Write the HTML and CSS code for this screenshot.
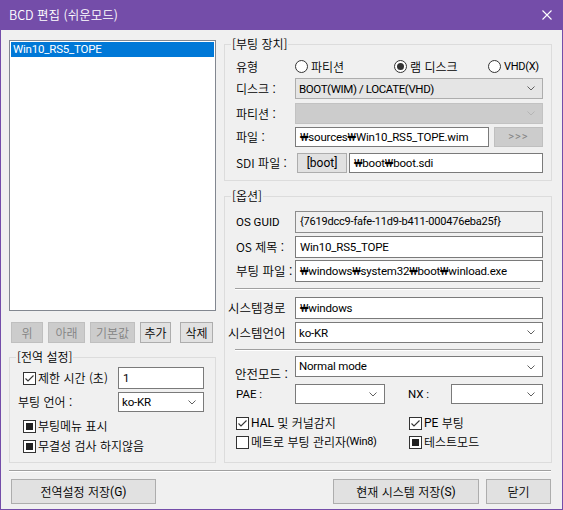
FILE: index.html
```html
<!DOCTYPE html>
<html lang="ko">
<head>
<meta charset="utf-8">
<title>BCD 편집</title>
<link rel="stylesheet" href="styles.css">
</head>
<body>
<div class="window">
  <div class="titlebar">
    <span class="title">BCD 편집 (쉬운모드)</span>
    <svg class="close" width="10" height="10" viewBox="0 0 10 10"><path d="M0.5 0.5L9.5 9.5M9.5 0.5L0.5 9.5" stroke="#fff" stroke-width="1.1" fill="none"/></svg>
  </div>
  <div class="main">
    <div class="col-left">
      <div class="listbox">
        <div class="item sel">Win10_RS5_TOPE</div>
      </div>
      <div class="btnrow">
        <div class="btn dis w32">위</div>
        <div class="btn dis w37">아래</div>
        <div class="btn dis w45">기본값</div>
        <div class="btn w31">추가</div>
        <div class="btn w33 push">삭제</div>
      </div>
      <fieldset class="group grow g-left">
        <legend>[전역 설정]</legend>
        <div class="gbody b-global">
          <div class="row h22">
            <span class="chk c95"><span class="box"><svg width="11" height="11" viewBox="0 0 11 11"><path d="M1.5 5.5L4 8L9.5 2.5" fill="none" stroke="#333" stroke-width="1.1"/></svg></span>제한 시간 (초)</span>
            <div class="field w86">1</div>
          </div>
          <div class="row h20 mt3">
            <span class="lbl lg-lang">부팅 언어 :</span>
            <div class="combo white w86"><span>ko-KR</span><svg class="chev" width="8" height="5" viewBox="0 0 8 5"><path d="M0.5 0.5L4 4L7.5 0.5" fill="none" stroke="#606060"/></svg></div>
          </div>
          <div class="row h16 mt6">
            <span class="chk"><span class="box ind"></span>부팅메뉴 표시</span>
          </div>
          <div class="row h16 mt4">
            <span class="chk"><span class="box ind"></span>무결성 검사 하지않음</span>
          </div>
        </div>
      </fieldset>
    </div>

    <div class="col-right">
      <fieldset class="group g1">
        <legend>[부팅 장치]</legend>
        <div class="gbody b1">
          <div class="row h19">
            <span class="lbl">유형</span>
            <span class="ropt w99"><span class="radio"></span>파티션</span>
            <span class="ropt w94"><span class="radio on"></span>램 디스크</span>
            <span class="ropt"><span class="radio"></span><span class="sm">VHD(X)</span></span>
          </div>
          <div class="row h21 mt2">
            <span class="lbl">디스크 :</span>
            <div class="combo list fill"><span>BOOT(WIM) / LOCATE(VHD)</span><svg class="chev" width="8" height="5" viewBox="0 0 8 5"><path d="M0.5 0.5L4 4L7.5 0.5" fill="none" stroke="#606060"/></svg></div>
          </div>
          <div class="row h21 mt4">
            <span class="lbl">파티션 :</span>
            <div class="combo disabled fill"><span></span><svg class="chev" width="8" height="5" viewBox="0 0 8 5"><path d="M0.5 0.5L4 4L7.5 0.5" fill="none" stroke="#B5B5B5"/></svg></div>
          </div>
          <div class="row h20 mt3">
            <span class="lbl">파일 :</span>
            <div class="field w194">₩sources₩Win10_RS5_TOPE.wim</div>
            <div class="btn dis fill ml5 arrows">&gt;&gt;&gt;</div>
          </div>
          <div class="row h20 mt6">
            <span class="lbl">SDI 파일 :</span>
            <div class="btn w50 ml2 latin">[boot]</div>
            <div class="field fill ml2">₩boot₩boot.sdi</div>
          </div>
        </div>
      </fieldset>

      <fieldset class="group grow g2">
        <legend>[옵션]</legend>
        <div class="gbody b2">
          <div class="row h22">
            <span class="lbl latin">OS GUID</span>
            <div class="field ro fill">{7619dcc9-fafe-11d9-b411-000476eba25f}</div>
          </div>
          <div class="row h22 mt3">
            <span class="lbl">OS 제목 :</span>
            <div class="field fill">Win10_RS5_TOPE</div>
          </div>
          <div class="row h22 mt2">
            <span class="lbl big">부팅 파일 :</span>
            <div class="field fill">₩windows₩system32₩boot₩winload.exe</div>
          </div>
          <div class="hsep"></div>
          <div class="row h22 mt7">
            <span class="lbl big out8">시스템경로</span>
            <div class="field fill">₩windows</div>
          </div>
          <div class="row h21 mt3">
            <span class="lbl big out8">시스템언어</span>
            <div class="combo white fill"><span>ko-KR</span><svg class="chev" width="8" height="5" viewBox="0 0 8 5"><path d="M0.5 0.5L4 4L7.5 0.5" fill="none" stroke="#606060"/></svg></div>
          </div>
          <div class="hsep"></div>
          <div class="row h21 mt5">
            <span class="lbl big low">안전모드 :</span>
            <div class="combo white fill top"><span>Normal mode</span><svg class="chev" width="8" height="5" viewBox="0 0 8 5"><path d="M0.5 0.5L4 4L7.5 0.5" fill="none" stroke="#606060"/></svg></div>
          </div>
          <div class="row h20 mt7">
            <span class="lbl latin">PAE :</span>
            <div class="combo white w90"><span></span><svg class="chev" width="8" height="5" viewBox="0 0 8 5"><path d="M0.5 0.5L4 4L7.5 0.5" fill="none" stroke="#606060"/></svg></div>
            <span class="lbl nx latin">NX :</span>
            <div class="combo white fill"><span></span><svg class="chev" width="8" height="5" viewBox="0 0 8 5"><path d="M0.5 0.5L4 4L7.5 0.5" fill="none" stroke="#606060"/></svg></div>
          </div>
          <div class="row h16 mt11">
            <span class="chk w173"><span class="box"><svg width="11" height="11" viewBox="0 0 11 11"><path d="M1.5 5.5L4 8L9.5 2.5" fill="none" stroke="#333" stroke-width="1.1"/></svg></span><span class="latin">HAL</span>&nbsp;및 커널감지</span>
            <span class="chk"><span class="box"><svg width="11" height="11" viewBox="0 0 11 11"><path d="M1.5 5.5L4 8L9.5 2.5" fill="none" stroke="#333" stroke-width="1.1"/></svg></span><span class="latin">PE</span>&nbsp;부팅</span>
          </div>
          <div class="row h16 mt3">
            <span class="chk w173"><span class="box"></span>메트로 부팅 관리자<span class="sm">(Win8)</span></span>
            <span class="chk"><span class="box ind"></span>테스트모드</span>
          </div>
        </div>
      </fieldset>
    </div>
  </div>
  <div class="foot-sep"></div>
  <div class="footer">
    <div class="btn w145 push-r">전역설정 저장<span class="latin">(G)</span></div>
    <div class="btn w146">현재 시스템 저장<span class="latin">(S)</span></div>
    <div class="btn w65">닫기</div>
  </div>
</div>
</body>
</html>
```

FILE: styles.css
```css
* { box-sizing: border-box; }
html, body { margin: 0; padding: 0; background: #F0F0F0; }
body {
  font-family: "Noto Sans CJK KR", "Noto Sans", sans-serif;
  font-size: 12px;
  font-weight: 350;
  line-height: 14px;
  color: #000;
}
.window {
  width: 563px;
  height: 510px;
  display: flex;
  flex-direction: column;
  background: #F0F0F0;
  border: 1px solid #744DA9;
  border-top: 0;
  overflow: hidden;
}
.titlebar {
  flex: none;
  height: 30px;
  background: #744DA9;
  color: #fff;
  display: flex;
  align-items: center;
  justify-content: space-between;
  padding: 0 10px 1px 8px;
}
.title { font-size: 12.5px; }
.close { display: block; }

.main {
  flex: 1;
  min-height: 0;
  display: flex;
  gap: 8px;
  padding: 10px 10px 0 8px;
}
.col-left { width: 207px; flex: none; display: flex; flex-direction: column; }
.col-right { flex: 1; min-width: 0; display: flex; flex-direction: column; }

.latin { font-family: Roboto, "Noto Sans CJK KR", sans-serif; font-weight: 400; }

.listbox {
  flex: none;
  height: 271px;
  border: 1px solid #828790;
  background: #fff;
  padding: 1px;
}
.item {
  height: 15px;
  line-height: 15px;
  padding-left: 2px;
  font-family: Roboto, "Noto Sans CJK KR", sans-serif;
  font-weight: 400;
  font-size: 11.5px;
  letter-spacing: -0.2px;
}
.item.sel { background: #0078D7; color: #fff; }

.btn {
  display: flex;
  align-items: center;
  justify-content: center;
  border: 1px solid #ADADAD;
  background: #E1E1E1;
  color: #000;
  white-space: nowrap;
}
.btn.dis { background: #CCCCCC; border-color: #BFBFBF; color: #838383; }
.btnrow { flex: none; display: flex; gap: 5px; margin-top: 11px; padding: 0 3px 0 2px; }
.btnrow .btn { height: 21px; }
.push { margin-left: auto; }
.arrows { font-family: Roboto, sans-serif; font-weight: 400; font-size: 11px; letter-spacing: 1px; color: #9A9A9A; }

.w31 { width: 31px; } .w32 { width: 32px; } .w33 { width: 33px; } .w37 { width: 37px; }
.w45 { width: 45px; } .w50 { width: 50px; } .w86 { width: 86px; } .w90 { width: 90px; }
.w94 { width: 94px; } .w99 { width: 99px; } .w145 { width: 145px; } .w146 { width: 146px; }
.w65 { width: 65px; } .w173 { width: 173px; } .w194 { width: 194px; }
.c95 { width: 95px; }
.fill { flex: 1; min-width: 0; }
.ml2 { margin-left: 2px; } .ml5 { margin-left: 5px; }
.mt2 { margin-top: 2px; } .mt3 { margin-top: 3px; } .mt4 { margin-top: 4px; } .mt5 { margin-top: 5px; }
.mt6 { margin-top: 6px; } .mt7 { margin-top: 7px; } .mt11 { margin-top: 11px; }
.h16 { height: 16px; } .h19 { height: 19px; } .h20 { height: 20px; } .h21 { height: 21px; } .h22 { height: 22px; }

.group {
  margin: 0;
  padding: 0;
  border: 1px solid #DCDCDC;
  min-width: 0;
}
.group legend { margin-left: 6px; padding: 0 1px; line-height: 14px; }
.grow { flex: 1; }
.g-left { margin-top: 7px; }
.g1 { margin-top: -3px; flex: none; }
.g2 { margin-top: 8px; }
.gbody { display: flex; flex-direction: column; }
.b-global { padding: 3px 0 0 13px; }
.b1 { padding: 6px 8px 7px 11px; }
.b2 { padding: 8px 8px 0 11px; }

.row { display: flex; align-items: center; flex: none; }
.row .field, .row .combo, .row .btn { align-self: stretch; }
.lbl { width: 59px; flex: none; white-space: nowrap; }
.lbl.latin { font-size: 11.5px; }
.lbl.big { font-size: 12.5px; }
.lbl.out8 { margin-left: -8px; width: 67px; }
.lbl.low { align-self: flex-end; margin-bottom: -4px; margin-left: -1px; width: 60px; }
.lbl.nx { margin-left: 23px; width: 43px; }
.lg-lang { margin-left: -5px; width: 100px; }
.sm { font-family: Roboto, sans-serif; font-weight: 400; font-size: 11px; letter-spacing: -0.3px; }

.field {
  border: 1px solid #7A7A7A;
  background: #fff;
  padding: 0 4px;
  display: flex;
  align-items: center;
  white-space: nowrap;
  overflow: hidden;
  font-family: Roboto, "Noto Sans CJK KR", sans-serif;
  font-weight: 400;
  font-size: 11.5px;
  letter-spacing: -0.2px;
}
.field.ro { background: #F0F0F0; border-color: #8C8C8C; font-size: 11px; }

.combo {
  display: flex;
  align-items: center;
  justify-content: space-between;
  padding: 0 7px 0 3px;
  border: 1px solid #7A7A7A;
  background: #fff;
  white-space: nowrap;
  font-family: Roboto, "Noto Sans CJK KR", sans-serif;
  font-weight: 400;
  font-size: 11.5px;
  letter-spacing: -0.2px;
}
.combo.list { background: #E5E5E5; border-color: #ADADAD; letter-spacing: -0.4px; }
.combo.disabled { background: #CCCCCC; border-color: #C2C2C2; }
.combo.top { align-items: flex-start; padding-top: 2px; }
.combo.top .chev { margin-top: 6px; }
.chev { display: block; flex: none; }

.ropt { display: flex; align-items: center; white-space: nowrap; flex: none; }
.radio {
  width: 13px;
  height: 13px;
  border: 1px solid #333;
  border-radius: 50%;
  background: #fff;
  margin-right: 3px;
  display: flex;
  align-items: center;
  justify-content: center;
  flex: none;
}
.radio.on::after {
  content: "";
  width: 7px;
  height: 7px;
  border-radius: 50%;
  background: #333;
}

.chk { display: flex; align-items: center; white-space: nowrap; flex: none; }
.box {
  width: 13px;
  height: 13px;
  border: 1px solid #333;
  background: #fff;
  margin-right: 2px;
  display: flex;
  align-items: center;
  justify-content: center;
  flex: none;
}
.box svg { display: block; }
.box.ind::after {
  content: "";
  width: 7px;
  height: 7px;
  background: #222;
}

.hsep {
  flex: none;
  margin: 6px 3px 0 -1px;
  border-top: 1px solid #A0A0A0;
  border-bottom: 1px solid #fff;
}

.foot-sep {
  flex: none;
  margin: 7px 11px 0 8px;
  border-top: 1px solid #A0A0A0;
  border-bottom: 1px solid #fff;
}
.footer {
  flex: none;
  display: flex;
  gap: 7px;
  padding: 7px 11px 5px 10px;
}
.footer .btn { height: 25px; }
.push-r { margin-right: auto; }
```
